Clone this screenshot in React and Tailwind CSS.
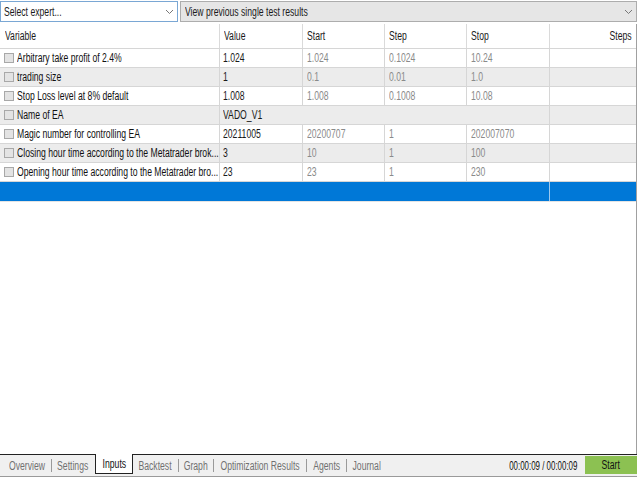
import React from "react";

const FONT = { fontFamily: '"Liberation Sans", Arial, sans-serif' };

// the reference text is very narrow (horizontally squeezed Segoe UI), so squeeze Arial the same way
function T({ children, origin = "origin-left", scale = "scale-x-[0.72]", className = "" }) {
    return <span className={`inline-block whitespace-nowrap ${scale} ${origin} ${className}`}>{children}</span>;
}

const rows = [
    { name: "Arbitrary take profit of 2.4%", value: "1.024", start: "1.024", step: "0.1024", stop: "10.24" },
    { name: "trading size", value: "1", start: "0.1", step: "0.01", stop: "1.0" },
    { name: "Stop Loss level at 8% default", value: "1.008", start: "1.008", step: "0.1008", stop: "10.08" },
    { name: "Name of EA", value: "VADO_V1", start: "", step: "", stop: "", text: true },
    { name: "Magic number for controlling EA", value: "20211005", start: "20200707", step: "1", stop: "202007070" },
    { name: "Closing hour time according to the Metatrader brok...", value: "3", start: "10", step: "1", stop: "100" },
    { name: "Opening hour time according to the Metatrader bro...", value: "23", start: "23", step: "1", stop: "230" },
];

const COLS = "grid grid-cols-[220px_83px_82px_82px_83px_1fr]";

function Chevron() {
    return (
        <svg width="9" height="6" viewBox="0 0 9 6" className="shrink-0">
            <path d="M1 1 L4.5 4.5 L8 1" fill="none" stroke="#777" strokeWidth="1" />
        </svg>
    );
}

function Check() {
    return <span className="w-[10px] h-[10px] shrink-0 bg-[#e3e3e3] border border-[#a8a8a8]" />;
}

function Sep() {
    return <div className="w-px h-[13px] bg-[#9a9a9a] self-center" />;
}

function Tab({ w, label, active }) {
    return (
        <div
            className={`${w} flex items-center justify-center ${
                active ? "bg-white border-x border-b border-[#222] -mt-px mb-[2px] text-[#111]" : "text-[#707070]"
            }`}
        >
            <T origin="origin-center">{label}</T>
        </div>
    );
}

export default function App() {
    return (
        <div className="w-[640px] h-[480px] bg-white flex flex-col text-[12px] text-[#1a1a1a] overflow-hidden" style={FONT}>
            {/* top selectors */}
            <div className="h-[24px] flex gap-[2px] pr-[3px] pt-[1px]">
                <div className="w-[178px] h-[21px] bg-white border border-[#7aa7d4] flex items-center justify-between pl-[3px] pr-[3px]">
                    <T>Select expert...</T>
                    <Chevron />
                </div>
                <div className="flex-1 h-[21px] bg-[#e6e6e6] border border-[#adadad] flex items-center justify-between pl-[4px] pr-[3px]">
                    <T>View previous single test results</T>
                    <Chevron />
                </div>
            </div>

            {/* inputs table */}
            <div className="flex-1 flex flex-col border-r border-[#a0a0a0] mr-[3px]">
                <div className={`${COLS} h-[24px]`}>
                    <div className="px-[5px] flex items-center border-r border-[#dadada]"><T>Variable</T></div>
                    <div className="px-[4px] flex items-center border-r border-[#dadada]"><T>Value</T></div>
                    <div className="px-[4px] flex items-center border-r border-[#dadada]"><T>Start</T></div>
                    <div className="px-[4px] flex items-center border-r border-[#dadada]"><T>Step</T></div>
                    <div className="px-[4px] flex items-center border-r border-[#dadada]"><T>Stop</T></div>
                    <div className="px-[4px] flex items-center justify-end"><T origin="origin-right">Steps</T></div>
                </div>
                {rows.map((r, i) => (
                    <div
                        key={r.name}
                        className={`${COLS} h-[19px] border-t border-[#d6d6d6] ${i % 2 ? "bg-[#ececec]" : "bg-white"}`}
                    >
                        <div className="pl-[4px] flex items-center gap-[3px] border-r border-[#d6d6d6] overflow-hidden">
                            <Check />
                            <T className="text-[#111]">{r.name}</T>
                        </div>
                        <div className={`px-[3px] flex items-center border-[#d6d6d6] ${r.text ? "" : "border-r"}`}><T>{r.value}</T></div>
                        <div className={`px-[4px] flex items-center text-[#8a8a8a] border-[#d6d6d6] ${r.text ? "" : "border-r"}`}><T>{r.start}</T></div>
                        <div className={`px-[4px] flex items-center text-[#8a8a8a] border-[#d6d6d6] ${r.text ? "" : "border-r"}`}><T>{r.step}</T></div>
                        <div className="px-[4px] flex items-center text-[#8a8a8a] border-r border-[#d6d6d6]"><T>{r.stop}</T></div>
                        <div />
                    </div>
                ))}
                <div className="grid grid-cols-[550px_1fr] h-[20px] bg-[#0078d7] border-t border-[#d6d6d6]">
                    <div className="border-r border-[#9cc8ee]" />
                    <div />
                </div>
                <div className="flex-1 border-t border-[#e4e4e4]" />
            </div>

            {/* bottom tabs */}
            <div className="h-[23px] flex bg-[#f0f0f0] border-t border-[#222] border-b border-b-[#9a9a9a] mr-[3px]">
                <div className="w-[2px]" />
                <Tab w="w-[49px]" label="Overview" />
                <Sep />
                <Tab w="w-[41px]" label="Settings" />
                <div className="w-[2px]" />
                <Tab w="w-[38px]" label="Inputs" active />
                <Tab w="w-[45px]" label="Backtest" />
                <Sep />
                <Tab w="w-[34px]" label="Graph" />
                <Sep />
                <Tab w="w-[92px]" label="Optimization Results" />
                <Sep />
                <Tab w="w-[39px]" label="Agents" />
                <Sep />
                <Tab w="w-[40px]" label="Journal" />
                <div className="flex-1 flex items-center justify-end pr-[8px] text-[#111]">
                    <T origin="origin-right" scale="scale-x-[0.66]">00:00:09 / 00:00:09</T>
                </div>
                <div className="w-[52px] pt-px pb-[2px]">
                    <div className="h-full bg-[#8cc152] flex items-center justify-center text-[#111]">
                        <T origin="origin-center">Start</T>
                    </div>
                </div>
            </div>
            <div className="h-[3px]" />
        </div>
    );
}
